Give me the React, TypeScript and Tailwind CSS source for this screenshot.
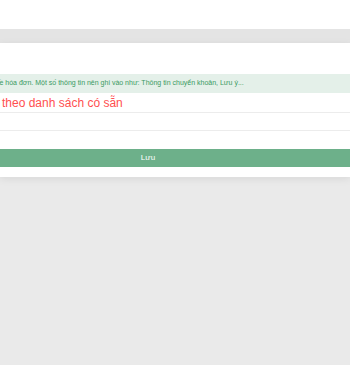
export default function App() {
  return (
    <div
      className="w-[350px] h-[365px] overflow-hidden bg-[#eaeaea] flex flex-col"
      style={{ fontFamily: '"Liberation Sans", Arial, sans-serif' }}
    >
      <div className="h-[29px] bg-white shrink-0" />
      <div className="h-[14px] bg-[#e4e4e4] shrink-0" />
      <div className="bg-white h-[134px] shrink-0 flex flex-col pt-[31px] shadow-[0_2px_8px_rgba(0,0,0,0.08)] relative">
        <div className="h-[19px] bg-[#e4f0e9] flex items-center overflow-hidden whitespace-nowrap">
          <span className="text-[7px] text-[#3a9a62] -ml-[4px]">
            về hóa đơn. Một số thông tin nên ghi vào như: Thông tin chuyển khoản, Lưu ý...
          </span>
        </div>
        <div className="h-[20px] border-b border-[#ececec] flex items-center pl-[2px]">
          <span className="text-[12px] text-[#ff4f4f] leading-none">theo danh sách có sẵn</span>
        </div>
        <div className="h-[18px] border-b border-[#ececec]" />
        <div className="h-[18px]" />
        <button className="h-[18px] bg-[#6db08a] text-white text-[8px] flex items-center justify-center pr-[54px]">
          Lưu
        </button>
      </div>
    </div>
  );
}
